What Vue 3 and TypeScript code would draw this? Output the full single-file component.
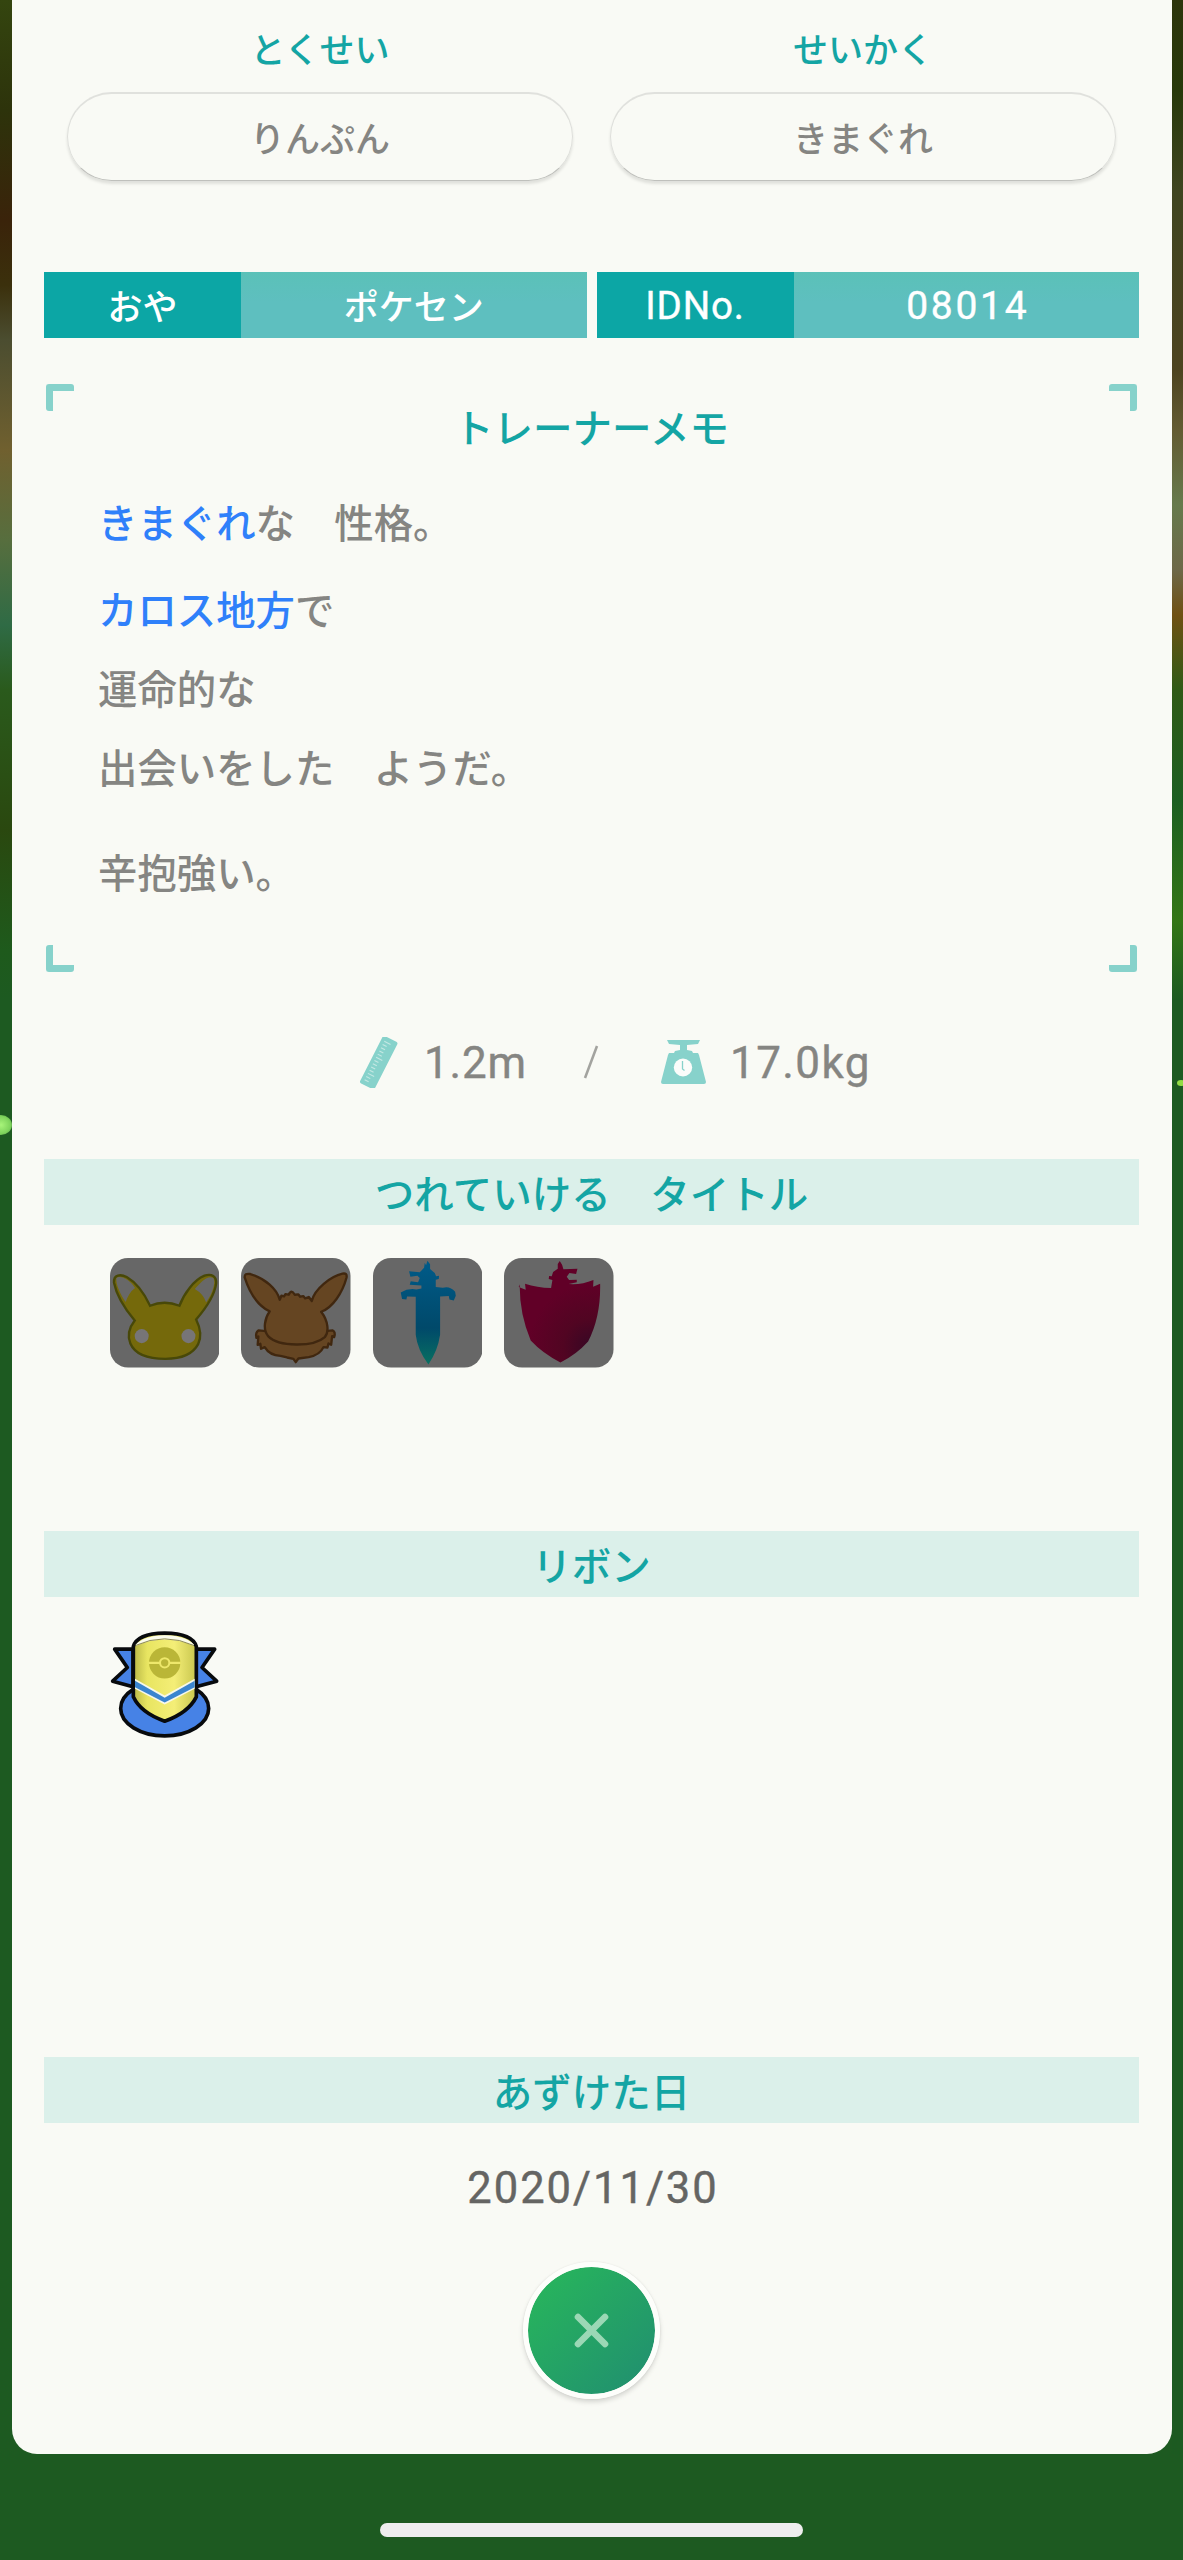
<script setup lang="ts">
interface MemoPart { text: string; key?: boolean }
interface MemoLine { id: string; parts: MemoPart[] }

const traits = [
  { label: 'とくせい', value: 'りんぷん' },
  { label: 'せいかく', value: 'きまぐれ' },
]

const memo: MemoLine[] = [
  { id: 'nature', parts: [{ text: 'きまぐれ', key: true }, { text: 'な　性格。' }] },
  { id: 'place', parts: [{ text: 'カロス地方', key: true }, { text: 'で' }] },
  { id: 'fate', parts: [{ text: '運命的な' }] },
  { id: 'meet', parts: [{ text: '出会いをした　ようだ。' }] },
  { id: 'habit', parts: [{ text: '辛抱強い。' }] },
]

const ticks = Array.from({ length: 13 }, (_, i) => ({ y: 4 + i * 3.6, len: i % 5 === 0 ? 7 : 4.5 }))
</script>

<template>
  <div class="screen">
    <div class="edge left"><i class="glow" /></div>
    <main class="card">
      <section class="traits">
        <div v-for="t in traits" :key="t.label" class="trait">
          <h3>{{ t.label }}</h3>
          <div class="pill">{{ t.value }}</div>
        </div>
      </section>

      <section class="owner">
        <div class="pair"><b>おや</b><span>ポケセン</span></div>
        <div class="pair latin"><b class="idno">IDNo.</b><span class="num">08014</span></div>
      </section>

      <section class="memo">
        <i class="corner tl" /><i class="corner tr" /><i class="corner bl" /><i class="corner br" />
        <h2>トレーナーメモ</h2>
        <p v-for="line in memo" :key="line.id" :class="line.id">
          <span v-for="part in line.parts" :key="part.text" :class="{ key: part.key }">{{ part.text }}</span>
        </p>
      </section>

      <section class="stats latin">
        <svg class="ruler" viewBox="0 0 39 51" width="39" height="51">
          <g transform="rotate(27 19.5 25.5)">
            <rect x="11.5" y="-1" width="16.500" height="53" rx="2" fill="#87d2cb" />
            <path v-for="t in ticks" :key="t.y" :d="`M15 ${t.y}h${t.len}`" stroke="#c4e8e3" stroke-width="1.1" />
          </g>
        </svg>
        <span class="height">1.2m</span>
        <svg class="slash" viewBox="0 0 16 34" width="16" height="34"><path d="M14 1 2 33" stroke="#a3a39f" stroke-width="2.600" /></svg>
        <svg class="scale" viewBox="0 0 45 44" width="45" height="44">
          <path d="M6 0h33l-2 4-11 1v5l5 1 1 2h5l1 2 7 27q0 2-2 2H2q-2 0-2-2L7 15l1-2h5l1-2 5-1V5L8 4z" fill="#87d2cb" />
          <ellipse cx="22" cy="27.500" rx="9.200" ry="9" fill="#fbfcfa" />
          <path d="M21.500 21v8l2 1.500" fill="none" stroke="#87d2cb" stroke-width="1.300" />
        </svg>
        <span class="weight">17.0kg</span>
      </section>

      <h2 class="band">つれていける　タイトル</h2>
      <section class="titles">
        <svg viewBox="59 84 328 328">
          <rect x="59" y="84" width="328" height="328" rx="54" fill="#676767" />
          <path d="M133 271C105 238 78 193 71 158C69 133 91 132 109 141C137 157 162 191 179 227Q222 209 267 227C280 192 310 150 342 137C364 130 378 139 377 160C372 198 343 238 317 268C329 292 334 319 323 342C306 374 269 386 225 386C177 386 134 373 120 340C110 315 119 289 133 271Z" fill="#75690b" stroke="#484808" stroke-width="7" />
          <path d="M78 145C87 133 119 148 134 174Q116 187 106 216C91 195 76 164 78 145ZM313 177C330 157 354 133 369 145C377 160 364 194 347 217Q338 191 313 177Z" fill="#686868" />
          <circle cx="154" cy="318" r="21" fill="#777577" /><circle cx="294" cy="318" r="21" fill="#777577" />
        </svg>
        <svg viewBox="454 84 328 328">
          <rect x="454" y="84" width="328" height="328" rx="54" fill="#676767" />
          <g fill="#654522" stroke="#40270f" stroke-width="7" stroke-linejoin="round">
            <path d="M506 301q-9 6-6 22l6-4-2 25 8-3 2 15 11-5q15 25 47 26l20 5 19 4 7 10 8-11 31-4q34-7 44-30l12 1 3-12 8 4 3-26 6 3q5-16-4-20L705 303H530Z" />
            <path d="M540 244C503 226 478 183 465 142Q464 129 482 132C527 146 562 177 570 209l5-12 8 2 4-7 10 2q8-18 18 0l11-1 5 7 10-2 5 7 11-4 9 12C674 177 723 139 758 131q15-3 12 12C758 187 729 233 694 245C716 273 718 306 705 321C672 351 567 351 535 318C518 297 526 263 540 244Z" />
          </g>
        </svg>
        <svg viewBox="67 84 328 328">
          <defs><linearGradient id="blade" x1="0" y1="0" x2="0" y2="1"><stop stop-color="#005b89" /><stop offset=".65" stop-color="#00496a" /><stop offset="1" stop-color="#087060" /></linearGradient></defs>
          <rect x="67" y="84" width="328" height="328" rx="54" fill="#676767" />
          <path d="M230 92l8 11v14l14 12 4 10 9-2-1 10-9 2v22l21 2q22-6 37 12l2 12-6 14-13-3-2-10-26 1v115Q261 362 233 403Q200 359 195 314V200l-26-1-2 9-13-1-4-20q22-13 47-9l15-3v-9l-35-2 3-10 22 3 5-13-7-7-21 3-4-16 32 3 13-14 2-15 4 8z" fill="url(#blade)" />
        </svg>
        <svg viewBox="462 84 328 328">
          <defs><radialGradient id="crest" gradientUnits="userSpaceOnUse" cx="725" cy="350" r="190"><stop stop-color="#350724" /><stop offset=".45" stop-color="#510522" /><stop offset="1" stop-color="#610027" /></radialGradient></defs>
          <rect x="462" y="84" width="328" height="328" rx="54" fill="#676767" />
          <path d="M506 171l21 8-2-18q36 12 78 13l4-24-11-3 1-9 8 1 4-13 14-10v-14l6-9 7 11 4 14 42-2-4 16-20-3-8 11 7 10 23-1v8l-24 5q37 3 74-12l-1 20 21-9q2 100-36 173-34 38-83 63-55-29-89-66-34-80-33-168Z" fill="url(#crest)" />
        </svg>
      </section>

      <h2 class="band">リボン</h2>
      <section class="ribbons">
        <svg viewBox="59 62 330 326">
          <defs><linearGradient id="plate"><stop stop-color="#b9b747" /><stop offset=".22" stop-color="#e8e561" /><stop offset=".65" stop-color="#f4ee77" /><stop offset="1" stop-color="#c8c64e" /></linearGradient></defs>
          <g stroke="#080a0d" stroke-width="11" stroke-linejoin="round">
            <ellipse cx="223" cy="297" rx="132" ry="82" fill="#4682e6" />
            <path d="M128 119H73l38 55-44 41 61 17ZM317 119h56l-38 55 44 41-62 17Z" fill="#4682e6" />
            <path d="M129 111Q141 72 223 71Q306 72 318 111V262Q294 310 223 335Q151 310 129 262Z" fill="url(#plate)" />
          </g>
          <path d="M137 107Q160 81 223 79Q287 81 310 107Q223 69 137 107Z" fill="#fbfced" stroke="#fbfced" stroke-width="4" />
          <path d="M135 108Q223 68 311 108" fill="none" stroke="#77733a" stroke-width="2.500" />
          <path d="M134 208l89 50 90-50v30l-90 47-89-47Z" fill="#f7f8e9" />
          <path d="M134 214l89 51 90-51v19l-90 46-89-46Z" fill="#3a85cf" />
          <circle cx="223" cy="160" r="47" fill="#bab637" />
          <path d="M175 160h96" stroke="#eee86b" stroke-width="7" /><circle cx="223" cy="160" r="17" fill="#eee86b" /><circle cx="223" cy="160" r="11" fill="#bab637" />
        </svg>
      </section>

      <h2 class="band">あずけた日</h2>
      <time class="date latin">2020/11/30</time>
      <button class="close" type="button" aria-label="とじる">
        <svg viewBox="0 0 36 36" width="36" height="36"><path d="M4 4 31 31M31 4 4 31" stroke="#9bd8b5" stroke-width="6.600" stroke-linecap="round" /></svg>
      </button>
    </main>
    <div class="edge right"><i class="glow" /></div>
    <div class="home" />
  </div>
</template>

<style>
body { margin: 0; background: #1d5a21; }
</style>

<style scoped>
* { box-sizing: border-box; }
.screen {
  display: grid;
  grid-template-columns: 11.5px 1160px 11.5px;
  grid-template-rows: 2454px 106px;
  width: 1183px;
  height: 2560px;
  overflow: hidden;
  background: #1d5a21;
  font-family: "Noto Sans CJK JP", sans-serif;
  font-weight: 500;
  color: #858582;
}
.edge { position: relative; width: 12px; }
.left { background: linear-gradient(#34450f 0, #2d330b 110px, #3a230a 220px, #3b300c 285px, #4b4d30 340px, #70602f 450px, #576e3e 540px, #2f6b45 625px, #2a5a1c 690px, #2a480f 830px, #1e5a1c 950px, #1d5a21 1000px); }
.right { background: linear-gradient(#2d350c 0, #27390a 90px, #3f4520 190px, #4d4420 370px, #635b32 430px, #667a4c 505px, #6d6848 570px, #6f5012 615px, #2f5a16 690px, #1c5f22 800px, #337616 920px, #1c5a21 1000px); }
.glow { position: absolute; }
.left .glow { left: -10px; top: 1115px; width: 22px; height: 20px; border-radius: 50%; background: radial-gradient(#a8f47a, #7ed35c 60%, #3b7f34); }
.right .glow { left: 5px; top: 1080px; width: 8px; height: 6px; border-radius: 50%; background: #93dc45; }
.card {
  height: 2454px;
  padding: 0 32.500px;
  border-radius: 0 0 25px 25px;
  background: #f9faf5;
  display: flex;
  flex-direction: column;
}
h2, h3, p { margin: 0; font-weight: 500; }
.traits { display: flex; gap: 37px; padding: 0 23px; height: 272px; flex: none; }
.trait { width: 506px; text-align: center; }
.trait h3 { height: 92px; padding-top: 6px; line-height: 84px; font-size: 35px; color: #14a5a4; }
.pill {
  height: 89px;
  border: 1px solid #dedfdb;
  border-top: 2px solid #e0e1dd;
  border-bottom-color: #bfc0bc;
  border-radius: 45px;
  box-shadow: 0 3px 3px #0000001a;
  line-height: 85px;
  font-size: 35px;
}
.owner { display: flex; gap: 10px; height: 66px; flex: none; font-size: 35px; line-height: 65px; color: #fff; text-align: center; }
.pair { display: flex; width: 542.500px; }
.pair b { width: 197px; background: #0ca6a5; font-weight: 500; }
.pair span { flex: 1; background: linear-gradient(#5bc1b8, #5ebfbf 45%); }
.latin { font-family: Roboto, "Noto Sans CJK JP", sans-serif; font-weight: 400; -webkit-text-stroke: 0.4px currentColor; }
.pair .idno { font-size: 38.500px; font-weight: 400; letter-spacing: 0.800px; line-height: 68px; }
.pair .num { font-size: 39px; letter-spacing: 2.700px; line-height: 68px; padding-left: 3px; }
.memo { position: relative; height: 587px; margin: 46px 2px 0; padding: 0 52px; flex: none; font-size: 39.400px; line-height: 60px; color: #858582; }
.memo h2 { height: 107px; line-height: 83px; font-size: 39.500px; text-align: center; color: #14a5a4; }
.memo p { height: 60px; white-space: nowrap; }
.memo .nature { margin-bottom: 27px; }
.memo .place, .memo .fate { margin-bottom: 19px; }
.memo .meet { margin-bottom: 45px; }
.key { color: #2f80fa; }
.corner { position: absolute; width: 28px; height: 27px; border: 0 solid #87d2cb; border-radius: 3px; }
.tl { left: 0; top: 0; border-width: 7px 0 0 7px; }
.tr { right: 0; top: 0; border-width: 7px 7px 0 0; }
.bl { left: 0; bottom: -1px; border-width: 0 0 7px 7px; }
.br { right: 0; bottom: -1px; border-width: 0 7px 7px 0; }
.stats { display: flex; align-items: center; height: 188px; flex: none; padding: 0 0 6px 315px; font-size: 44px; color: #858582; }
.stats svg { flex: none; }
.height { width: 156px; margin: 1px 0 0 26px; letter-spacing: 0.800px; }
.slash { margin-left: 3px; }
.scale { margin-left: 62px; }
.weight { margin: 1px 0 0 24px; letter-spacing: 1.400px; }
.band { flex: none; height: 66px; line-height: 66px; background: #dbf0ea; color: #14a5a4; font-size: 39.500px; text-align: center; }
.titles { display: flex; flex: none; gap: 22px; height: 306px; padding: 33px 0 0 65.500px; }
.titles svg { width: 109.500px; height: 109.500px; }
.ribbons { flex: none; height: 460px; padding: 33px 0 0 66px; }
.ribbons svg { width: 110px; height: 109px; }
.date { flex: none; height: 139px; padding-left: 3px; line-height: 132px; text-align: center; font-size: 43.500px; letter-spacing: 2px; color: #656563; }
.close {
  display: flex;
  flex: none;
  align-items: center;
  justify-content: center;
  align-self: center;
  width: 137px;
  height: 137px;
  padding: 0;
  border: 5px solid #fdfefb;
  border-radius: 50%;
  background: linear-gradient(135deg, #27b35d 15%, #21906f 90%) border-box;
  background-clip: padding-box;
  box-shadow: 0 3px 5px #00000026, 0 0 2px #00000018;
}
.home { grid-column: 1 / -1; justify-self: center; width: 423px; height: 14px; margin-top: 69px; border-radius: 7px; background: #eee; }
</style>
